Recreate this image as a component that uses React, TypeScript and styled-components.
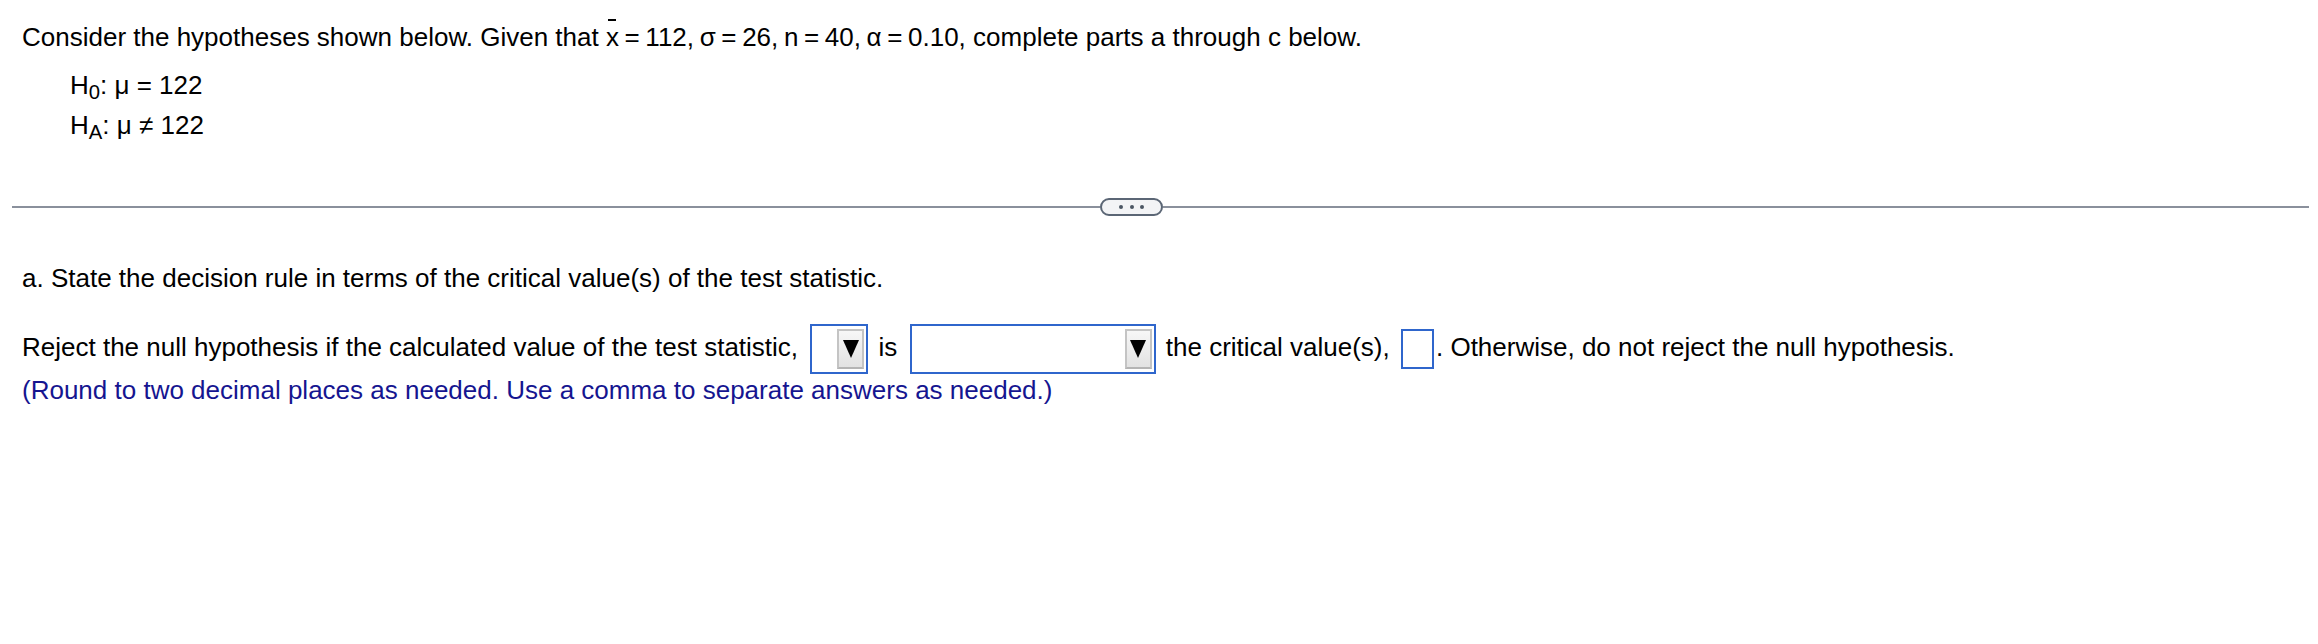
import React from "react";
import styled, { createGlobalStyle } from "styled-components";

const GlobalStyle = createGlobalStyle`
  html, body {
    margin: 0;
    padding: 0;
    background: #ffffff;
  }
  body {
    font-family: "Liberation Sans", Arial, Helvetica, sans-serif;
    font-size: 26px;
    color: #000000;
  }
`;

const Page = styled.main`
  padding: 21px 9px 0 12px;
`;

const Prompt = styled.p`
  margin: 0;
  padding-left: 10px;
  line-height: 32px;
  white-space: nowrap;
`;

// inline math runs a little tighter around the operators than body text
const Math = styled.span`
  word-spacing: -1.6px;
`;

const XBar = styled.span`
  position: relative;

  &::before {
    content: "";
    position: absolute;
    top: -3px;
    left: 50%;
    width: 8px;
    height: 2px;
    margin-left: -4px;
    background: #000000;
  }
`;

const Hypotheses = styled.div`
  margin-top: 12px;
  padding-left: 58px;
  line-height: 40px;
`;

const HLine = styled.div`
  white-space: nowrap;
`;

const Sub = styled.span`
  font-size: 0.78em;
  line-height: 1;
  vertical-align: -5px;
`;

const Divider = styled.div`
  display: flex;
  align-items: center;
  height: 18px;
  margin-top: 53px;
`;

const Rule = styled.div<{ $width?: string }>`
  flex: ${(p) => (p.$width ? `0 0 ${p.$width}` : "1 1 auto")};
  height: 2px;
  background: #8a909c;
`;

const Pill = styled.button`
  display: flex;
  align-items: center;
  justify-content: center;
  gap: 6.5px;
  box-sizing: border-box;
  width: 63px;
  height: 18px;
  padding: 0;
  border: 2px solid #5b6675;
  border-radius: 9px;
  background: #f3f4f6;
`;

const Dot = styled.span`
  width: 4px;
  height: 4px;
  border-radius: 50%;
  background: #4b5563;
`;

const Part = styled.p`
  margin: 46px 0 0;
  padding-left: 10px;
  line-height: 32px;
`;

const Answer = styled.p`
  margin: 30px 0 0;
  padding-left: 10px;
  line-height: 32px;
  white-space: nowrap;
`;

const Hint = styled.p`
  margin: 0;
  padding-left: 10px;
  line-height: 32px;
  color: #151590;
`;

const SelectBox = styled.span<{ $width: number }>`
  display: inline-flex;
  align-items: center;
  justify-content: flex-end;
  box-sizing: border-box;
  width: ${(p) => p.$width}px;
  height: 50px;
  margin: 0 3px 0 5px;
  padding-right: 2px;
  border: 2px solid #2f66cc;
  background: #ffffff;
  vertical-align: middle;
`;

const ArrowButton = styled.span`
  display: flex;
  align-items: center;
  justify-content: center;
  box-sizing: border-box;
  width: 27px;
  height: 40px;
  border: 2px solid #c4c4c4;
  border-bottom-color: #b4b4b4;
  background: linear-gradient(#f7f7f7, #e2e2e2);
`;

const InputBox = styled.span`
  display: inline-block;
  box-sizing: border-box;
  width: 33px;
  height: 40px;
  margin: 0 2px 0 4px;
  border: 2px solid #2f66cc;
  background: #ffffff;
  vertical-align: middle;
`;

const Select = ({ width }: { width: number }) => (
  <SelectBox $width={width}>
    <ArrowButton>
      <svg width="16" height="18" viewBox="0 0 16 18">
        <polygon points="0,0 16,0 8,18" fill="#000" />
      </svg>
    </ArrowButton>
  </SelectBox>
);

export default function App() {
  return (
    <>
      <GlobalStyle />
      <Page>
        <Prompt>
          {"Consider the hypotheses shown below. Given that "}
          <Math>
            <XBar>x</XBar>
            {" = 112, σ = 26, n = 40, α = 0.10,"}
          </Math>
          {" complete parts a through c below."}
        </Prompt>
        <Hypotheses>
          <HLine>
            H<Sub>0</Sub>: μ = 122
          </HLine>
          <HLine>
            H<Sub>A</Sub>: μ ≠ 122
          </HLine>
        </Hypotheses>
        <Divider>
          <Rule $width="1088px" />
          <Pill aria-label="more">
            <Dot />
            <Dot />
            <Dot />
          </Pill>
          <Rule />
        </Divider>
        <Part>a. State the decision rule in terms of the critical value(s) of the test statistic.</Part>
        <Answer>
          {"Reject the null hypothesis if the calculated value of the test statistic, "}
          <Select width={58} />
          {" is "}
          <Select width={246} />
          {" the critical value(s), "}
          <InputBox />
          {". Otherwise, do not reject the null hypothesis."}
        </Answer>
        <Hint>(Round to two decimal places as needed. Use a comma to separate answers as needed.)</Hint>
      </Page>
    </>
  );
}
